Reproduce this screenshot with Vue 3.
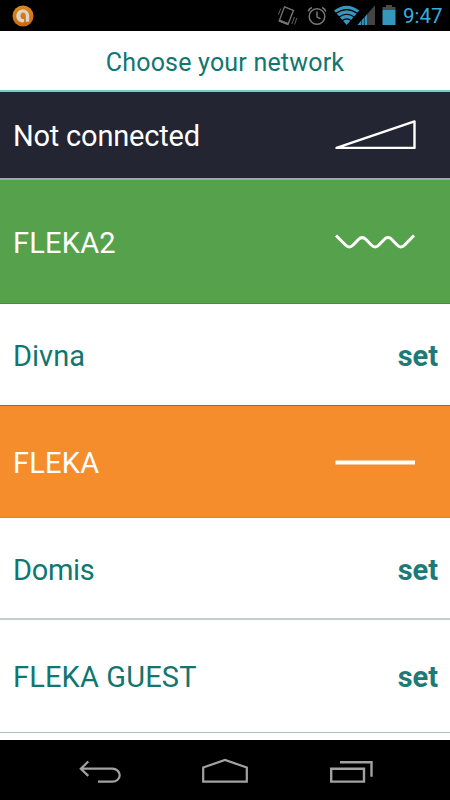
<script setup>
const rows = [
  { name: 'Not connected', kind: 'dark', icon: 'signal' },
  { name: 'FLEKA2', kind: 'green', icon: 'wave' },
  { name: 'Divna', kind: 'plain first', icon: null },
  { name: 'FLEKA', kind: 'orange', icon: 'line' },
  { name: 'Domis', kind: 'plain second', icon: null },
  { name: 'FLEKA GUEST', kind: 'plain third', icon: null },
]
</script>

<template>
  <div class="phone">
    <div class="status">
      <svg class="badge" viewBox="0 0 22 22">
        <defs>
          <linearGradient id="sun" x1="0" y1="0" x2="0" y2="1">
            <stop offset="0" stop-color="#d98a20" />
            <stop offset="1" stop-color="#cf6a08" />
          </linearGradient>
        </defs>
        <circle cx="11" cy="11" r="10.500" fill="url(#sun)" />
        <path d="M8.200 17C3.800 15.200 3 9.400 6.300 6.300c4.300-4 10.900-.8 10.900 4.500v6h-3.400v-6c0-3-2-3.700-3.300-3.200-2.500.9-2.500 4.800-.8 6.100 1 .7 2 .3 2.400 0v3.100c-1 .8-2.500.7-3.900.2z" fill="#ddd5cb" />
      </svg>
      <svg class="tray" viewBox="0 0 126 31">
        <g fill="none" stroke="#777" stroke-width="1.300">
          <path d="M7.500 6.800 16.500 10.300 11 24.300 2.200 20.800z" />
          <path d="M2.200 20.600 11 24.100" stroke-width="2.200" />
          <path d="M3.800 8.500 1.500 14.500M17.500 17 14.800 24M19.800 18 17.600 24.500" stroke-width=".8" />
          <circle cx="40" cy="16.500" r="7.800" stroke-width="1.500" />
          <path d="M40 11.500v5.300l3.500 2M31.200 11.500c.5-2 1.900-3.300 3.700-4M48.800 11.500c-.5-2-1.900-3.300-3.700-4" stroke-width="1.500" />
        </g>
        <path d="M57 10.500Q69.700 1 82.300 10.500L69.700 25z" fill="#3597bf" />
        <path d="M59 13.300q10.700-7.500 21.400 0M62 17q7.700-5.500 15.400 0M65 20.700q4.700-3.500 9.400 0" fill="none" stroke="#000" stroke-width="1.200" />
        <path d="M98 5.300V25H80.500z" fill="#444" />
        <path d="M90 14.500V25H80.500z" fill="#3597bf" />
        <path d="M84.500 20v5M87.300 17v8" stroke="#111" stroke-width=".7" />
        <path d="M109 5h6v2h3.500v3h-13v-3h3.500z" fill="#4c4c4c" />
        <path d="M105.500 10h13V25h-13z" fill="#3597bf" />
      </svg>
      <span class="clock">9:47</span>
    </div>

    <header class="title"><span>Choose your network</span></header>

    <main class="list">
      <div v-for="row in rows" :key="row.name" class="row" :class="row.kind">
        <span class="name">{{ row.name }}</span>
        <svg v-if="row.icon" class="icon" viewBox="0 0 82 34">
          <path v-if="row.icon === 'signal'" d="M1.500 29.900 79.500 3.400V29.900z" fill="none" stroke="#fff" stroke-width="2.400" stroke-linejoin="round" />
          <path v-else-if="row.icon === 'wave'" d="M1 10.500 10.500 20Q14.300 24 18.100 20L23.400 14.500Q27.200 10.700 31 14.500L36.300 20Q40.100 24 43.900 20L49.200 14.500Q53 10.700 56.800 14.500L62.100 20Q65.900 24 69.700 20L79 10.500" fill="none" stroke="#fff" stroke-width="3" />
          <path v-else d="M.500 17.500H80" stroke="#fff" stroke-width="4" />
        </svg>
        <span v-else class="set">set</span>
      </div>
    </main>

    <nav class="nav">
      <svg viewBox="0 0 450 60" fill="none" stroke="#a2a2a2">
        <path d="M81 28.700H112.500a7.200 6.500 0 0 1 0 13H98M88.300 21.500 80.800 28.700 88.300 35.900" stroke-width="2.200" />
        <path d="M203.200 41.600V27.500L225 20 246.800 27.500V41.600z" stroke-width="2.200" />
        <path d="M331.200 28.800H364V41.600H331.200zM340 22.300H371.500V36.800" stroke-width="2.400" />
      </svg>
    </nav>
  </div>
</template>

<style>
body {
  margin: 0;
  overflow: hidden;
}
</style>

<style scoped>
.phone {
  width: 450px;
  height: 800px;
  display: flex;
  flex-direction: column;
  background: #fff;
  overflow: hidden;
  font-family: Roboto, "Liberation Sans", sans-serif;
}
.status {
  height: 31px;
  flex: none;
  display: flex;
  align-items: center;
  background: #000;
}
.badge {
  width: 22px;
  height: 22px;
  margin-left: 12px;
}
.tray {
  width: 126px;
  height: 31px;
  margin-left: 243px;
}
.clock {
  font-size: 20.500px;
  line-height: 29px;
  padding-top: 2px;
  color: #35afe0;
}
.title {
  box-sizing: border-box;
  height: 61px;
  flex: none;
  text-align: center;
  font-size: 25px;
  letter-spacing: 0.200px;
  line-height: 61px;
  padding-top: 1px;
  color: #117670;
  border-bottom: 2px solid #72cfc9;
}
.list {
  flex: 1;
  display: flex;
  flex-direction: column;
}
.row {
  box-sizing: border-box;
  flex: none;
  display: flex;
  align-items: center;
  justify-content: space-between;
  padding: 0 12px 0 13px;
  font-size: 29px;
  color: #117670;
}
.name {
  white-space: nowrap;
  padding-top: 2px;
}
.icon {
  width: 82px;
  height: 34px;
  margin-right: 21px;
}
.set {
  font-weight: 700;
  padding-top: 2px;
  color: #1d7a76;
}
.dark {
  height: 88px;
  background: #242532;
  color: #fff;
  border-bottom: 2px solid #a5a2b3;
  letter-spacing: -0.200px;
}
.green {
  height: 124px;
  background: #56a14b;
  color: #fff;
  border-bottom: 1px solid #3b9632;
  letter-spacing: 0.200px;
}
.orange {
  height: 113px;
  background: #f58d2d;
  color: #fff;
  border-top: 1px solid #8a7040;
  border-bottom: 1px solid #ee830f;
  letter-spacing: 0.200px;
}
.first {
  height: 101px;
}
.second {
  height: 102px;
  border-bottom: 2px solid #c5cfce;
}
.second .name {
  letter-spacing: -0.300px;
}
.second .name,
.second .set {
  padding-top: 4px;
}
.third {
  height: 113px;
  border-bottom: 1px solid #adc1be;
}
.third .name {
  letter-spacing: 0.150px;
}
.nav {
  height: 60px;
  flex: none;
  background: #000;
}
.nav svg {
  display: block;
  width: 450px;
  height: 60px;
}
</style>
